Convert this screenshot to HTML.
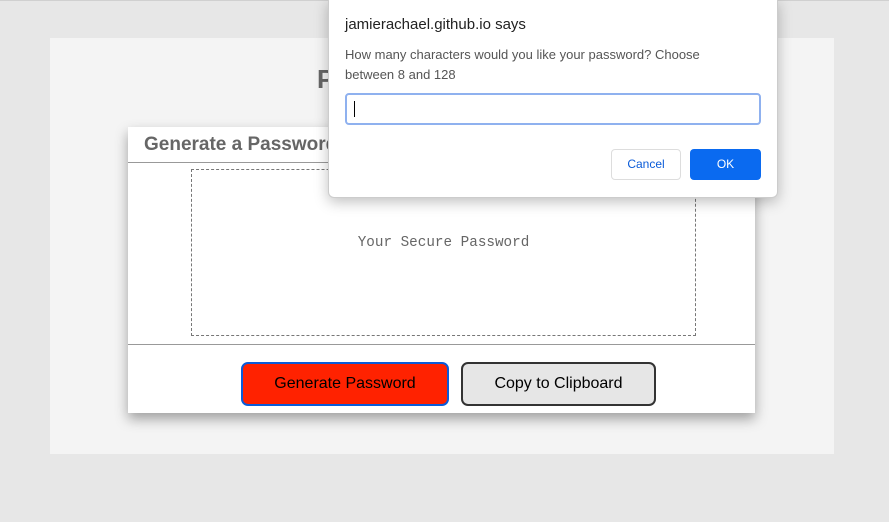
<!DOCTYPE html>
<html><head><style>
body{margin:0;width:889px;height:522px;background:#e7e7e7;font-family:"Liberation Sans",sans-serif;position:relative;overflow:hidden}
.top{position:absolute;left:0;top:0;width:889px;height:1px;background:#d0d0d0}
.outer{position:absolute;left:50px;top:38px;width:784px;height:416px;background:#f4f4f4}
.h1{position:absolute;left:317px;top:64px;font-size:26px;font-weight:bold;color:#666}
.card{position:absolute;left:128px;top:127px;width:627px;height:286px;background:#fff;box-shadow:0 6px 12px rgba(0,0,0,.35)}
.card h2{margin:0;position:absolute;left:16px;top:7px;font-size:19px;color:#666;font-weight:bold}
.l1{position:absolute;left:0;top:35px;width:627px;height:1px;background:#999}
.l2{position:absolute;left:0;top:217px;width:627px;height:1px;background:#999}
.ta{position:absolute;left:63px;top:42px;width:505px;height:167px;border:1px dashed #777;box-sizing:border-box}
.ta span{position:absolute;left:0;right:0;top:65px;text-align:center;font-family:"Liberation Mono",monospace;font-size:14.3px;color:#666}
.b{position:absolute;top:235px;height:44px;box-sizing:border-box;border-radius:7px;font-size:16px;text-align:center;line-height:40px;color:#000}
.g{left:113px;width:208px;background:#ff2200;border:2px solid #0a5bd8}
.c{left:333px;width:195px;background:#e6e6e6;border:2px solid #333}
.dlg{position:absolute;left:328px;top:-1px;width:448px;height:197px;background:#fff;border:1px solid #ccc;border-radius:0 0 6px 6px;box-shadow:0 4px 14px rgba(0,0,0,.25);font-family:"Liberation Sans",sans-serif}
.dt{position:absolute;left:16px;top:16px;font-size:15px;color:#222}
.dm{position:absolute;left:16px;top:45px;font-size:13px;color:#555;line-height:20px;width:400px}
.in{position:absolute;left:16px;top:93px;width:416px;height:32px;box-sizing:border-box;border:2px solid #8fb1ef;border-radius:4px}
.in i{position:absolute;left:7px;top:6px;width:1px;height:16px;background:#000}
.cb{position:absolute;left:282px;top:149px;width:70px;height:31px;box-sizing:border-box;border:1px solid #ddd;border-radius:4px;font-size:12px;color:#0a5bd8;text-align:center;line-height:29px}
.ok{position:absolute;left:361px;top:149px;width:71px;height:31px;background:#0a6af0;border-radius:4px;font-size:12px;color:#fff;text-align:center;line-height:31px}
</style></head><body>
<div class="top"></div>
<div class="outer"></div>
<div class="h1">Password Generator</div>
<div class="card"><h2>Generate a Password</h2><div class="l1"></div>
<div class="ta"><span>Your Secure Password</span></div><div class="l2"></div>
<div class="b g">Generate Password</div><div class="b c">Copy to Clipboard</div></div>
<div class="dlg"><div class="dt">jamierachael.github.io says</div>
<div class="dm">How many characters would you like your password? Choose between 8 and 128</div>
<div class="in"><i></i></div><div class="cb">Cancel</div><div class="ok">OK</div></div>
</body></html>
